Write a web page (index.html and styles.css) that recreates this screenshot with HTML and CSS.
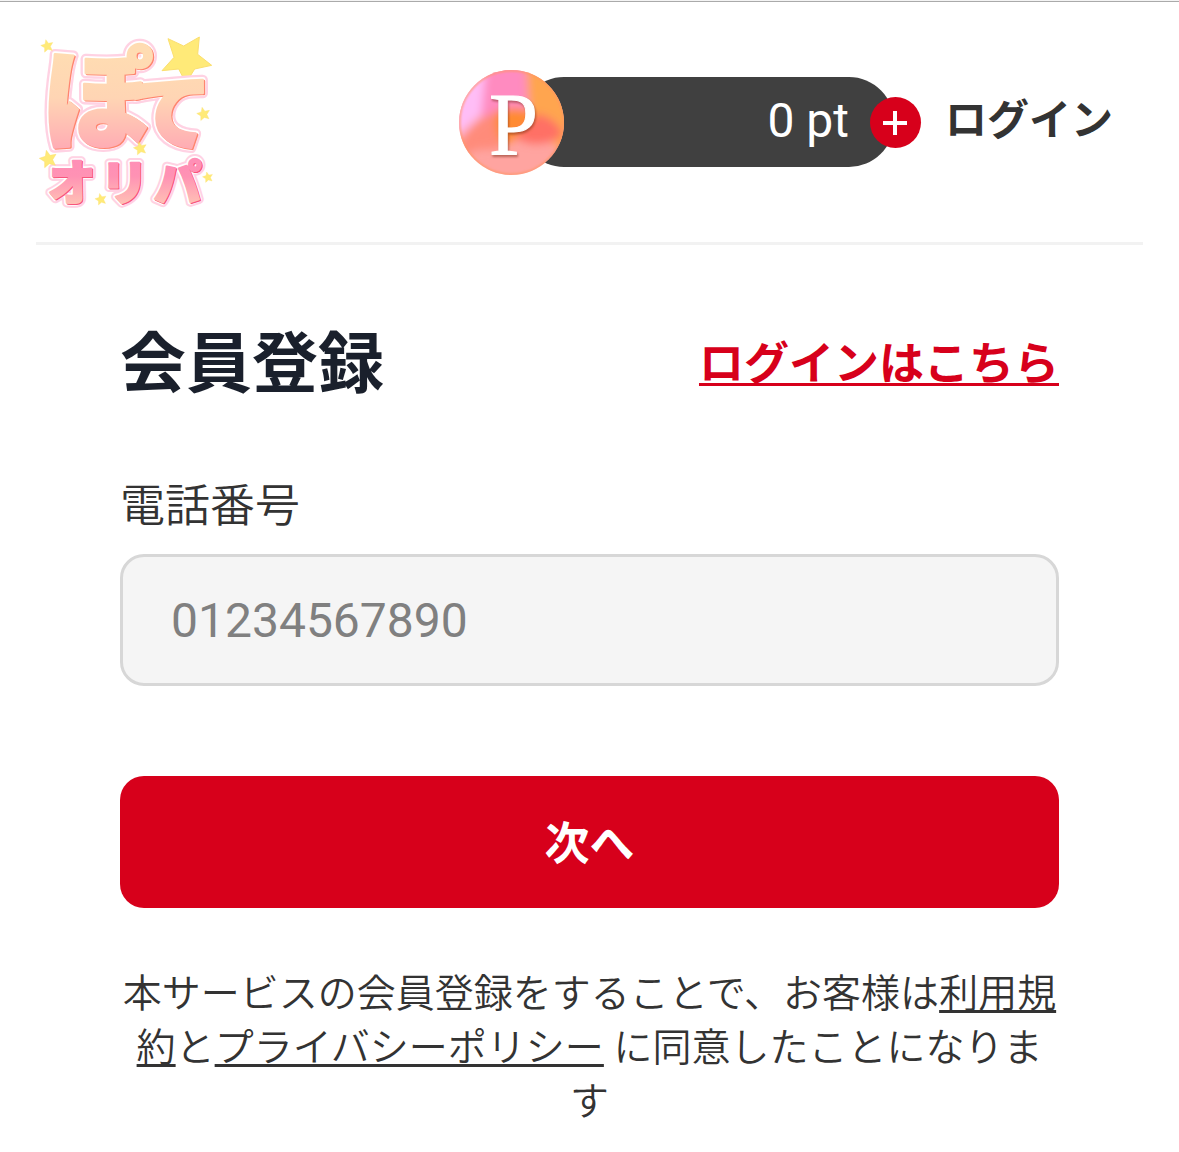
FILE: index.html
```html
<!DOCTYPE html>
<html lang="ja">
<head>
    <meta charset="UTF-8">
    <meta name="viewport" content="width=device-width, initial-scale=1.0">
    <title>会員登録 | ぽてオリパ</title>
    <link rel="stylesheet" href="styles.css">
</head>
<body>
    <header class="header">
        <a class="logo" href="#" aria-label="ぽてオリパ">
            <svg viewBox="18 21 540 540" class="logo-image">
                <defs>
                    <linearGradient id="peach" gradientUnits="userSpaceOnUse" x1="0" y1="90" x2="0" y2="375">
                        <stop offset="0" stop-color="#ffdcb2"/>
                        <stop offset="0.45" stop-color="#ffd5b4"/>
                        <stop offset="1" stop-color="#ffabb4"/>
                    </linearGradient>
                    <linearGradient id="pink" gradientUnits="userSpaceOnUse" x1="0" y1="410" x2="0" y2="535">
                        <stop offset="0" stop-color="#ff8fb6"/>
                        <stop offset="0.35" stop-color="#ff92b4"/>
                        <stop offset="1" stop-color="#ffc0b5"/>
                    </linearGradient>
                    <path id="star" d="M-10 -50 L12 -20 L48 -26 L28 6 L44 40 L8 30 L-20 54 L-20 18 L-52 -2 L-16 -14 Z"/>
                    <g id="big-letters">
                        <text class="po" x="42" y="342">ぽ</text>
                        <text class="te" x="296" y="354">て</text>
                    </g>
                    <g id="small-letters">
                        <text x="54" y="524">オ</text>
                        <text x="212" y="524">リ</text>
                        <text x="372" y="524">パ</text>
                    </g>
                </defs>
                <path class="big-star" d="M414 41 L461 63 L508 36 L503 88 L545 121 L494 132 L468 174 L446 132 L396 137 L432 97 Z"/>
                <use href="#big-letters" class="big outer"/>
                <use href="#small-letters" class="small outer"/>
                <use href="#big-letters" class="big inner"/>
                <use href="#small-letters" class="small inner"/>
                <use href="#big-letters" class="big edge" x="4" y="4"/>
                <use href="#big-letters" class="big face"/>
                <use href="#small-letters" class="small edge" x="3" y="3"/>
                <use href="#small-letters" class="small face"/>
                <g class="stars">
                    <use href="#star" transform="translate(51 62) scale(.36)"/>
                    <use href="#star" transform="translate(520 266) scale(.38)"/>
                    <use href="#star" transform="translate(330 369) scale(.38)"/>
                    <use href="#star" transform="translate(54 401) scale(.5)"/>
                    <use href="#star" transform="translate(533 456) scale(.3)"/>
                    <use href="#star" transform="translate(212 522) scale(.33)"/>
                </g>
            </svg>
        </a>
        <div class="header-right">
            <div class="point">
                <svg viewBox="0 0 105 105" class="coin">
                    <defs>
                        <clipPath id="coin-clip"><circle cx="52.5" cy="52.5" r="52.5"/></clipPath>
                        <filter id="soft" x="-20%" y="-20%" width="140%" height="140%"><feGaussianBlur stdDeviation="4"/></filter>
                        <filter id="rim"><feGaussianBlur stdDeviation="1"/></filter>
                    </defs>
                    <g clip-path="url(#coin-clip)">
                        <rect width="105" height="105" fill="#ffa4a0"/>
                        <g filter="url(#soft)">
                            <path d="M-10 -10 H40 L28 40 L0 65 H-10 Z" fill="#ffbdf6"/>
                            <path d="M28 -10 H66 L74 46 H22 Z" fill="#ff8bc0"/>
                            <path d="M67 -10 H115 V78 H100 L70 48 Z" fill="#ffa550"/>
                            <path d="M0 76 Q15 46 40 42 V80 Q18 76 5 86 Z" fill="#ff8b7a"/>
                            <path d="M36 42 Q58 32 80 46 L60 66 L44 76 Q34 62 36 42 Z" fill="#ff8b32"/>
                            <path d="M58 64 L80 44 Q100 50 104 66 Q78 80 58 68 Z" fill="#ff7065"/>
                        </g>
                        <circle cx="52.5" cy="52.5" r="52" fill="none" stroke="#ff9560" stroke-opacity=".8" stroke-width="2" filter="url(#rim)"/>
                    </g>
                    <text class="coin-letter" x="30" y="84">P</text>
                </svg>
                <span class="point-value">0 pt</span>
                <a class="point-add" href="#" aria-label="ポイント購入">
                    <svg viewBox="0 0 51 51"><path d="M13 26H37M25 14V38" stroke="#fff" stroke-width="4"/></svg>
                </a>
            </div>
            <a class="login" href="#">ログイン</a>
        </div>
    </header>
    <main class="register">
        <div class="register-head">
            <h1>会員登録</h1>
            <a class="login-link" href="#">ログインはこちら</a>
        </div>
        <form>
            <label for="tel">電話番号</label>
            <input type="tel" id="tel" placeholder="01234567890">
            <button type="submit">次へ</button>
        </form>
        <p class="terms">本サービスの会員登録をすることで、お客様は<a href="#">利用規約</a>と<a href="#">プライバシーポリシー</a> に同意したことになります</p>
    </main>
</body>
</html>
```
FILE: styles.css
```css
* {
    margin: 0;
    padding: 0;
    box-sizing: border-box;
}
body {
    border-top: 1px solid #f4f4f4;
    background: #fff;
    color: #333;
    font-family: Roboto, "Noto Sans CJK JP", sans-serif;
}
body::before {
    content: "";
    display: block;
    height: 1px;
    background: #aaa;
}
a {
    color: inherit;
}
.header {
    display: flex;
    justify-content: space-between;
    align-items: center;
    margin: 0 36px;
    padding: 30px 0;
    border-bottom: 3px solid #f2f2f2;
}
.logo, .logo-image {
    display: block;
    width: 180px;
    height: 180px;
}
.logo text {
    font-family: "Noto Sans CJK JP", sans-serif;
    font-weight: 900;
}
.po {
    font-size: 325px;
}
.te {
    font-size: 250px;
}
.small {
    font-size: 142px;
}
.big, .small {
    stroke-linejoin: round;
}
.outer {
    fill: #ffd2e3;
    stroke: #ffd2e3;
    stroke-width: 32px;
}
.inner {
    fill: #fff;
    stroke: #fff;
    stroke-width: 18px;
}
.small.outer {
    stroke-width: 28px;
}
.small.inner {
    stroke-width: 16px;
}
.big.edge, .big.face {
    stroke-width: 8px;
}
.small.edge, .small.face {
    stroke-width: 6px;
}
.big.edge {
    fill: #ff8570;
    stroke: #ff8570;
}
.big.face {
    fill: url(#peach);
    stroke: url(#peach);
}
.small.edge {
    fill: #f8557c;
    stroke: #f8557c;
}
.small.face {
    fill: url(#pink);
    stroke: url(#pink);
}
.stars, .big-star {
    fill: #ffea78;
    stroke: #fbdf70;
    stroke-width: 3px;
    stroke-linejoin: round;
}
.header-right {
    display: flex;
    align-items: center;
    gap: 24px;
    margin-right: 30px;
}
.point {
    display: flex;
    align-items: center;
    position: relative;
    width: 462px;
    height: 105px;
}
.point::before {
    content: "";
    position: absolute;
    left: 60px;
    right: 27px;
    height: 90px;
    border-radius: 45px;
    background: #404040;
}
.coin {
    position: relative;
    width: 105px;
    height: 105px;
}
.coin-letter {
    font-family: "Liberation Serif", serif;
    font-size: 88px;
    fill: #fff;
    stroke: #fff;
    stroke-width: 1px;
    filter: drop-shadow(1px 2px 1px rgba(120, 40, 20, 0.5));
}
.point-value {
    position: relative;
    flex: 1;
    padding: 0 21px 3px 0;
    font-size: 48px;
    color: #fff;
    text-align: right;
}
.point-add {
    position: relative;
    width: 51px;
    height: 51px;
    border-radius: 50%;
    background: #d7001b;
}
.login {
    padding-bottom: 12px;
    font-size: 42px;
    font-weight: 700;
    text-decoration: none;
}
.register {
    padding: 75px 120px 24px;
}
.register-head {
    display: flex;
    justify-content: space-between;
    align-items: center;
}
h1 {
    font-size: 66px;
    font-weight: 700;
    line-height: 90px;
    color: #1a202c;
}
.login-link {
    padding-bottom: 9px;
    font-size: 45px;
    font-weight: 700;
    color: #d7001b;
    text-decoration-thickness: 3px;
    text-underline-offset: 3px;
    text-decoration-skip-ink: none;
}
form {
    margin-top: 64px;
}
label {
    display: block;
    font-size: 45px;
    font-weight: 350;
    line-height: 66px;
    margin-bottom: 14px;
}
input {
    display: block;
    width: 100%;
    height: 132px;
    padding: 0 48px;
    border: 3px solid #d7d7d7;
    border-radius: 24px;
    background: #f5f5f5;
    font-family: inherit;
    font-size: 48px;
    color: #333;
}
input::placeholder {
    color: #808080;
}
button {
    display: block;
    width: 100%;
    height: 132px;
    margin-top: 90px;
    padding-bottom: 3px;
    border: none;
    border-radius: 24px;
    background: #d7001b;
    font-family: inherit;
    font-size: 45px;
    font-weight: 700;
    color: #fff;
    cursor: pointer;
}
.terms {
    margin-top: 59px;
    font-size: 39px;
    font-weight: 350;
    line-height: 54px;
    text-align: center;
}
.terms a {
    text-decoration-thickness: 3px;
    text-underline-offset: 3px;
    text-decoration-skip-ink: none;
}
```
